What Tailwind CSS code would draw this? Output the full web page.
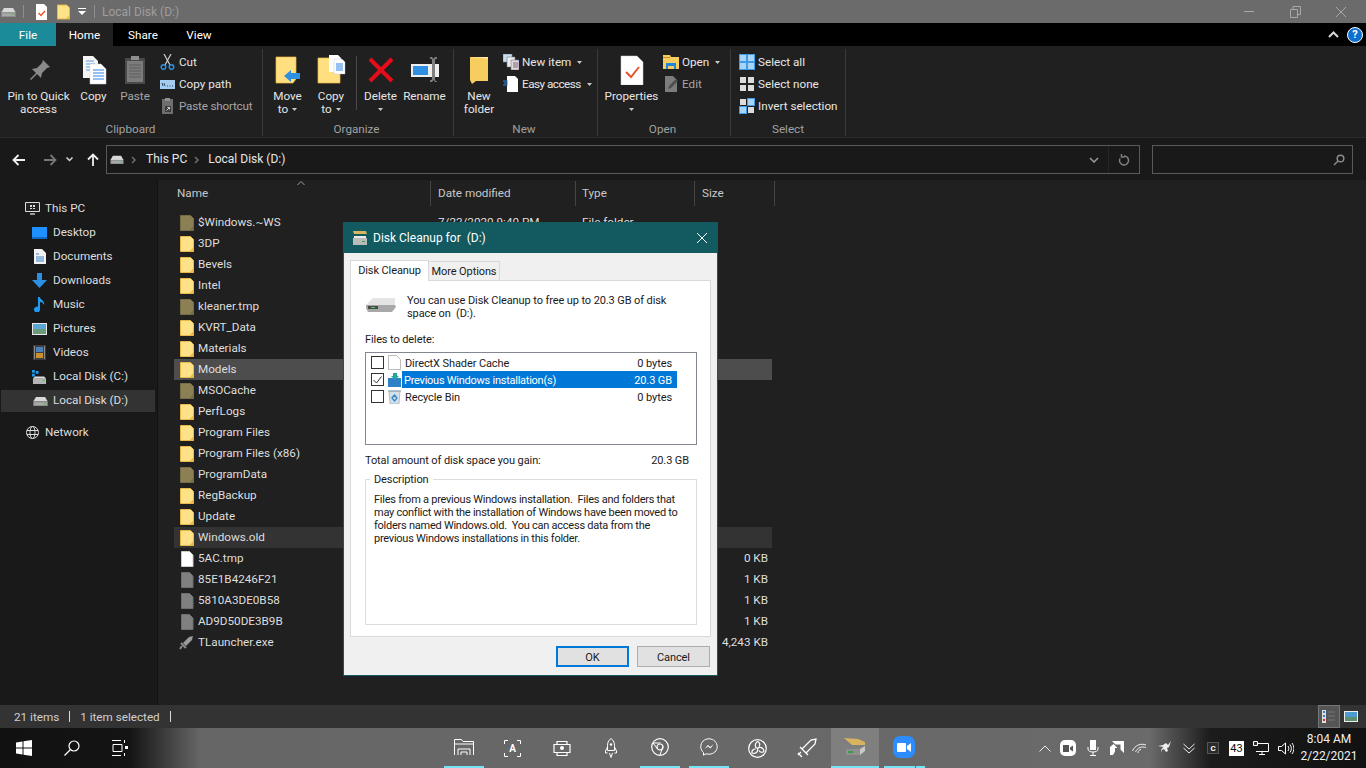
<!DOCTYPE html>
<html lang="en">
<head>
  <meta charset="UTF-8">
  <title>Local Disk (D:)</title>
  <script src="https://cdn.jsdelivr.net/npm/@tailwindcss/browser@4"></script>
</head>
<body class="font-['Roboto',sans-serif] text-[11.7px] leading-[13px] bg-[#202020] overflow-hidden whitespace-nowrap">
<svg class="hidden" xmlns="http://www.w3.org/2000/svg">
  <symbol id="folder" viewBox="0 0 14 16"><path d="M.5.5h10l3 3v12H.5z" fill="#ffe187" stroke="#e9b949"/><path d="M13.5 11v4.500h-4z" fill="#e9b949"/></symbol>
  <symbol id="folderdim" viewBox="0 0 14 16"><path d="M.5.5h10l3 3v12H.5z" fill="#8b7f54" stroke="#776c46"/><path d="M13.5 11v4.500h-4z" fill="#776c46"/></symbol>
  <symbol id="filegray" viewBox="0 0 14 16"><path d="M1.500.5h8l3.500 3.500v11.500H1.500z" fill="#808080" stroke="#6e6e6e"/></symbol>
  <symbol id="drive" viewBox="0 0 16 11"><path d="M3 1h10l3 5H0z" fill="#d8d8d8"/><path d="M0 6h16v5H0z" fill="#8d8d8d"/><path d="M1 7h14v3H1z" fill="#a9a9a9"/><path d="M11 8h3v1h-3z" fill="#43d04b"/></symbol>
  <symbol id="caret" viewBox="0 0 7 4"><path d="M0 0h7L3.500 4z" fill="#c8c8c8"/></symbol>
  <symbol id="chev" viewBox="0 0 6 8"><path d="M1 1l3 3-3 3" fill="none" stroke="#6e6e6e" stroke-width="1.500"/></symbol>
</svg>

<div class="w-[1366px] h-[768px] flex flex-col relative">
  <!-- title bar -->
  <div class="h-[23px] bg-[#6b6b6b] flex items-center shrink-0 relative">
    <svg class="w-[15px] h-[10px] ml-[1px]"><use href="#drive"/></svg>
    <div class="w-px h-[13px] bg-[#8f8f8f] ml-[7px]"></div>
    <svg class="w-[13px] h-[16px] ml-[11px]" viewBox="0 0 13 16"><path d="M1 0h8l3 3v13H1z" fill="#fff"/><path d="M3.500 9l2.500 2.500L10 7" fill="none" stroke="#e8542a" stroke-width="1.500"/></svg>
    <svg class="w-[13px] h-[16px] ml-[9px]"><use href="#folder"/></svg>
    <svg class="w-[8px] h-[7px] ml-[8px]" viewBox="0 0 8 7"><path d="M0 0h8v1H0z" fill="#fff"/><path d="M0 3h8L4 7z" fill="#fff"/></svg>
    <div class="w-px h-[13px] bg-[#8f8f8f] ml-[8px]"></div>
    <span class="ml-[7px] pt-[1px] text-[#9e9e9e] text-[12px]">Local Disk (D:)</span>
    <div class="ml-auto flex items-center mr-[2px]">
      <svg class="w-[46px] h-[12px]" viewBox="0 0 46 12"><path d="M18 5.500h10" stroke="#a8a8a8"/></svg>
      <svg class="w-[46px] h-[12px]" viewBox="0 0 46 12"><path d="M18.500 3.500h7v8h-7zM21 3.500V.5h7.500v8h-3" fill="none" stroke="#a8a8a8"/></svg>
      <svg class="w-[46px] h-[12px]" viewBox="0 0 46 12"><path d="M18 1l10 10M28 1L18 11" stroke="#a8a8a8"/></svg>
    </div>
  </div>

  <!-- ribbon tabs -->
  <div class="h-[23px] bg-black flex text-white shrink-0 items-stretch">
    <div class="w-[56px] bg-[#1b8a99] flex items-center justify-center pt-[1px]">File</div>
    <div class="w-[57px] bg-[#202020] flex items-center justify-center pt-[1px]">Home</div>
    <div class="w-[60px] flex items-center justify-center pt-[1px]">Share</div>
    <div class="w-[52px] flex items-center justify-center pt-[1px]">View</div>
    <div class="ml-auto flex items-center mr-[3px]">
      <svg class="w-[11px] h-[7px] mr-[8px]" viewBox="0 0 11 7"><path d="M1 6l4.500-4.500L10 6" fill="none" stroke="#d8d8d8" stroke-width="2"/></svg>
      <div class="w-[16px] h-[16px] rounded-full bg-[#0f6fd0] border border-white text-white text-[11px] font-bold flex items-center justify-center">?</div>
    </div>
  </div>

  <!-- ribbon -->
  <div class="h-[92px] bg-[#202020] border-b border-[#2c2c2c] flex pt-[3px] pb-[1px] text-[#e6e6e6] shrink-0">
    <!-- Clipboard -->
    <div class="w-[263px] border-r border-[#3a3a3a] flex flex-col">
      <div class="h-[73px] flex">
        <div class="w-[73px] ml-[2px] pt-[6px] flex flex-col items-center text-center">
          <svg class="w-[30px] h-[30px]" viewBox="0 0 30 30"><path d="M19 5l7 7-3 1-5 5-1 5-4-4-6 6-1-1 6-6-4-4 5-1 5-5z" fill="#8a8a8a"/></svg>
          <div class="mt-[5px]">Pin to Quick<br>access</div>
        </div>
        <div class="w-[37px] pt-[6px] flex flex-col items-center">
          <svg class="w-[30px] h-[30px]" viewBox="0 0 30 30"><path d="M4 1h10l5 5v17H4z" fill="#f4f4f4"/><path d="M7 6h8M7 9h9M7 12h9M7 15h9" stroke="#5a9be6"/><path d="M11 9h11l5 5v15H11z" fill="#fff" stroke="#d0d0d0" stroke-width=".5"/><path d="M14 15h11M14 18h11M14 21h11M14 24h11" stroke="#2f81e6"/></svg>
          <div class="mt-[5px]">Copy</div>
        </div>
        <div class="w-[46px] pt-[6px] flex flex-col items-center text-[#a6a6a6]">
          <svg class="w-[30px] h-[30px]" viewBox="0 0 30 30"><path d="M6 3h18a1 1 0 011 1v25H5V4a1 1 0 011-1z" fill="#4a4a4a"/><path d="M7 6h16v21H7z" fill="#7c7c7c"/><path d="M11 1h8v4h-8z" fill="#8f8f8f"/><path d="M9 10h12M9 13h12M9 16h12M9 19h12M9 22h12" stroke="#5c5c5c"/></svg>
          <div class="mt-[5px]">Paste</div>
        </div>
        <div class="pt-[2px] ml-[2px]">
          <div class="h-[22px] flex items-center gap-[4px]">
            <svg class="w-[15px] h-[16px]" viewBox="0 0 15 16"><path d="M4 0l6 11M11 0L5 11" stroke="#cfcfcf" stroke-width="1.200"/><circle cx="3.500" cy="13" r="2.300" fill="none" stroke="#2f8fe0" stroke-width="1.500"/><circle cx="11.500" cy="13" r="2.300" fill="none" stroke="#2f8fe0" stroke-width="1.500"/></svg>
            <span>Cut</span>
          </div>
          <div class="h-[22px] flex items-center gap-[4px]">
            <svg class="w-[15px] h-[9px]" viewBox="0 0 15 9"><path d="M0 0h15v9H0z" fill="#a5cdf2"/><path d="M2 3l1 3M4 3l1 3M7 6h1M9.500 6h1M12 6h1" stroke="#33475c"/></svg>
            <span>Copy path</span>
          </div>
          <div class="h-[22px] flex items-center gap-[4px] text-[#a6a6a6]">
            <svg class="w-[15px] h-[16px]" viewBox="0 0 15 16"><path d="M2 1h11v15H2z" fill="#6e6e6e"/><path d="M5 0h5v3H5z" fill="#8f8f8f"/><path d="M5 8h6v6H5z" fill="#3c3c3c"/><path d="M6.500 12.500L9.500 9.500M7.500 9.500h2v2" stroke="#cfcfcf" fill="none"/></svg>
            <span class="tracking-[-0.2px]">Paste shortcut</span>
          </div>
        </div>
      </div>
      <div class="mt-auto text-center text-[#a0a0a0] pr-[1px]">Clipboard</div>
    </div>
    <!-- Organize -->
    <div class="w-[191px] border-r border-[#3a3a3a] flex flex-col">
      <div class="h-[73px] flex">
        <div class="w-[45px] ml-[2px] pt-[6px] flex flex-col items-center text-center">
          <svg class="w-[30px] h-[30px]" viewBox="0 0 30 30"><path d="M3 2h20v22l-3 4H3z" fill="#ffdf7f" stroke="#e9b949" stroke-width=".7"/><path d="M11 21l7-6v3h9v6h-9v3z" fill="#2f8fe0"/></svg>
          <div class="mt-[5px]">Move<br>to <svg class="inline w-[5px] h-[3px] ml-[1px] align-middle"><use href="#caret"/></svg></div>
        </div>
        <div class="w-[42px] pt-[6px] flex flex-col items-center text-center">
          <svg class="w-[30px] h-[30px]" viewBox="0 0 30 30"><path d="M2 3h22v25H2z" fill="#ffdf7f" stroke="#e9b949" stroke-width=".7"/><path d="M13 0h9l3 3v14H13z" fill="#fff"/><path d="M18 4h8l3 3v12H18z" fill="#fff" stroke="#bbb" stroke-width=".4"/><path d="M20 9h7M20 11h7M20 13h7M20 15h7" stroke="#2f81e6"/></svg>
          <div class="mt-[5px]">Copy<br>to <svg class="inline w-[5px] h-[3px] ml-[1px] align-middle"><use href="#caret"/></svg></div>
        </div>
        <div class="w-px h-[54px] bg-[#4a4a4a] mt-[7px] ml-[4px]"></div>
        <div class="w-[43px] ml-[2px] pt-[6px] flex flex-col items-center text-center">
          <svg class="w-[30px] h-[30px]" viewBox="0 0 30 30"><path d="M4 4l22 22M26 4L4 26" stroke="#e50d1a" stroke-width="4"/></svg>
          <div class="mt-[5px]">Delete<br><svg class="inline w-[5px] h-[3px] align-middle"><use href="#caret"/></svg></div>
        </div>
        <div class="w-[45px] pt-[6px] flex flex-col items-center text-center">
          <svg class="w-[30px] h-[30px]" viewBox="0 0 30 30"><path d="M1 9h28v13H1z" fill="#eee"/><path d="M3 11h15v9H3z" fill="#2f8fe0"/><path d="M20 2h2l1.500 2L25 2h2v1.500l-2 1v21l2 1V27h-2l-1.500-2L22 27h-2v-1.500l2-1v-20l-2-1z" fill="#808080"/></svg>
          <div class="mt-[5px]">Rename</div>
        </div>
      </div>
      <div class="mt-auto text-center text-[#a0a0a0] pr-[3px]">Organize</div>
    </div>
    <!-- New -->
    <div class="w-[144px] border-r border-[#3a3a3a] flex flex-col">
      <div class="h-[73px] flex">
        <div class="w-[46px] ml-[2px] pt-[6px] flex flex-col items-center text-center">
          <svg class="w-[30px] h-[30px]" viewBox="0 0 30 30"><path d="M6 2h18v24H8z" fill="#ffe9a3"/><path d="M6 2l12 1 6 1v22H12l-4 3-2-4z" fill="#f6cd5e"/></svg>
          <div class="mt-[5px]">New<br>folder</div>
        </div>
        <div class="pt-[2px] ml-[1px]">
          <div class="h-[22px] flex items-center gap-[3px]">
            <svg class="w-[16px] h-[16px]" viewBox="0 0 16 16"><path d="M0 0h9v8H0z" fill="#c9dcef" stroke="#6f8aa5" stroke-width=".6"/><path d="M4 3h8v10H4z" fill="#eee" stroke="#777" stroke-width=".6"/><path d="M8 6h8v10H8z" fill="#ddd" stroke="#8a6f8a" stroke-width=".6"/><path d="M10 9h5M10 11h5M10 13h5" stroke="#8a5f7a"/></svg>
            <span>New item</span>
            <svg class="w-[5px] h-[3px] ml-[3px]"><use href="#caret"/></svg>
          </div>
          <div class="h-[22px] flex items-center gap-[3px]">
            <svg class="w-[16px] h-[16px]" viewBox="0 0 16 16"><path d="M4 0h8l3 3v13H4z" fill="#fff"/><path d="M0 5h5M1 7h4M0 9h5" stroke="#2f81e6"/></svg>
            <span class="tracking-[-0.5px]">Easy access</span>
            <svg class="w-[5px] h-[3px] ml-[3px]"><use href="#caret"/></svg>
          </div>
        </div>
      </div>
      <div class="mt-auto text-center text-[#a0a0a0] pr-[3px]">New</div>
    </div>
    <!-- Open -->
    <div class="w-[133px] border-r border-[#3a3a3a] flex flex-col">
      <div class="h-[73px] flex">
        <div class="w-[57px] ml-[5px] pt-[6px] flex flex-col items-center text-center">
          <svg class="w-[30px] h-[30px]" viewBox="0 0 30 30"><path d="M4 1h16l6 6v23H4z" fill="#fff" stroke="#ccc" stroke-width=".5"/><path d="M9 17l5 5 8-10" fill="none" stroke="#e8542a" stroke-width="2"/></svg>
          <div class="mt-[5px]">Properties<br><svg class="inline w-[5px] h-[3px] align-middle"><use href="#caret"/></svg></div>
        </div>
        <div class="pt-[2px] ml-[3px]">
          <div class="h-[22px] flex items-center gap-[3px]">
            <svg class="w-[16px] h-[14px]" viewBox="0 0 16 14"><path d="M0 0h7l1 2h8v12H0z" fill="#f6cd5e"/><path d="M0 2h7v1H0z" fill="#c98f1e"/><path d="M3 8h10v6h-2v-3H5v3H3z" fill="#1f86dc"/></svg>
            <span>Open</span>
            <svg class="w-[5px] h-[3px] ml-[3px]"><use href="#caret"/></svg>
          </div>
          <div class="h-[22px] flex items-center gap-[3px] text-[#a6a6a6]">
            <svg class="w-[16px] h-[16px]" viewBox="0 0 16 16"><path d="M2 0h8l4 4v12H2z" fill="#7c7c7c"/><path d="M5 13l1-3 7-7 2 2-7 7z" fill="#4d4d4d"/></svg>
            <span>Edit</span>
          </div>
        </div>
      </div>
      <div class="mt-auto text-center text-[#a0a0a0] pr-[3px]">Open</div>
    </div>
    <!-- Select -->
    <div class="w-[115px] border-r border-[#3a3a3a] flex flex-col">
      <div class="h-[73px] pl-[8px] pt-[2px]">
        <div class="h-[22px] flex items-center gap-[3px]">
          <svg class="w-[16px] h-[16px]" viewBox="0 0 16 16"><path d="M0 0h16v16H0z" fill="#3f9be8"/><path d="M1 1h6v6H1zM9 1h6v6H9zM1 9h6v6H1zM9 9h6v6H9z" fill="#a8d4f7"/></svg>
          <span>Select all</span>
        </div>
        <div class="h-[22px] flex items-center gap-[3px]">
          <svg class="w-[16px] h-[16px]" viewBox="0 0 16 16"><path d="M1 1h6v6H1zM9 1h6v6H9zM1 9h6v6H1zM9 9h6v6H9z" fill="#dcdcdc"/></svg>
          <span>Select none</span>
        </div>
        <div class="h-[22px] flex items-center gap-[3px]">
          <svg class="w-[16px] h-[16px]" viewBox="0 0 16 16"><path d="M8 0h8v8H8zM0 8h8v8H0z" fill="#3f9be8"/><path d="M9 1h6v6H9zM1 9h6v6H1z" fill="#a8d4f7"/><path d="M1 1h6v6H1zM9 9h6v6H9z" fill="#dcdcdc"/></svg>
          <span>Invert selection</span>
        </div>
      </div>
      <div class="mt-auto text-center text-[#a0a0a0]">Select</div>
    </div>
  </div>

  <!-- address row -->
  <div class="h-[42px] bg-[#191919] flex items-center shrink-0 pt-[1px]">
    <svg class="w-[14px] h-[12px] ml-[12px]" viewBox="0 0 14 12"><path d="M13 6H2M6.500 1L1.500 6l5 5" fill="none" stroke="#f0f0f0" stroke-width="1.800"/></svg>
    <svg class="w-[14px] h-[12px] ml-[17px]" viewBox="0 0 14 12"><path d="M1 6h11M7.500 1l5 5-5 5" fill="none" stroke="#777" stroke-width="1.800"/></svg>
    <svg class="w-[7px] h-[5px] ml-[9px]" viewBox="0 0 7 5"><path d="M.5.5l3 3 3-3" fill="none" stroke="#d8d8d8" stroke-width="1.500"/></svg>
    <svg class="w-[12px] h-[13px] ml-[14px]" viewBox="0 0 12 13"><path d="M6 13V2M1 6.500l5-5 5 5" fill="none" stroke="#f0f0f0" stroke-width="1.800"/></svg>
    <div class="w-[1034px] h-[29px] ml-[7px] border border-[#5a5a5a] flex items-center text-[#e6e6e6] text-[12px]">
      <svg class="w-[14px] h-[9px] ml-[3px]"><use href="#drive"/></svg>
      <svg class="w-[6px] h-[8px] ml-[7px]"><use href="#chev"/></svg>
      <span class="ml-[9px]">This PC</span>
      <svg class="w-[6px] h-[8px] ml-[7px]"><use href="#chev"/></svg>
      <span class="ml-[8px]">Local Disk (D:)</span>
      <svg class="w-[10px] h-[6px] ml-auto mr-[9px]" viewBox="0 0 10 6"><path d="M1 1l4 4 4-4" fill="none" stroke="#9a9a9a" stroke-width="1.500"/></svg>
      <div class="w-[31px] h-full border-l border-[#262626] flex items-center justify-center">
        <svg class="w-[12px] h-[12px]" viewBox="0 0 12 12"><path d="M6 2a4.500 4.500 0 11-4 2.500M3.500 0v3h3" fill="none" stroke="#7f7f7f" stroke-width="1.500"/></svg>
      </div>
    </div>
    <div class="w-[201px] h-[29px] ml-[12px] border border-[#5a5a5a] flex items-center justify-end pr-[7px]">
      <svg class="w-[12px] h-[12px]" viewBox="0 0 12 12"><circle cx="7.500" cy="4.500" r="3.300" fill="none" stroke="#8a8a8a" stroke-width="1.500"/><path d="M5 7l-4 4" stroke="#8a8a8a" stroke-width="1.500"/></svg>
    </div>
  </div>

  <!-- content -->
  <div class="flex flex-1 min-h-0">
    <!-- navigation pane -->
    <div class="w-[158px] bg-[#191919] border-r border-[#111] shrink-0 pt-[17px] text-[#dedede] [&>div]:pb-[0.5px]">
      <div class="h-[24px] flex items-center pl-[25px]">
        <svg class="w-[15px] h-[13px] mr-[5px]" viewBox="0 0 15 13"><path d="M.5.5h14v9H.5z" fill="#222" stroke="#ddd"/><path d="M5 3h2v2H5zM8 3h2v2H8zM5 6h2v1H5zM8 6h2v1H8z" fill="#ddd"/><path d="M5 11h5v2H5z" fill="#999"/></svg>This PC</div>
      <div class="h-[24px] flex items-center pl-[32px]">
        <svg class="w-[15px] h-[12px] mr-[6px]" viewBox="0 0 15 12"><path d="M0 0h15v10H0z" fill="#1e90ff"/><path d="M0 10h15v2H0z" fill="#0f6bc4"/></svg>Desktop</div>
      <div class="h-[24px] flex items-center pl-[34px]">
        <svg class="w-[12px] h-[15px] mr-[7px]" viewBox="0 0 12 15"><path d="M0 0h8l4 4v11H0z" fill="#f2f2f2"/><path d="M2 5h3M2 8h8M2 10h8M2 12h8" stroke="#3b82c4"/></svg>Documents</div>
      <div class="h-[24px] flex items-center pl-[32px]">
        <svg class="w-[15px] h-[15px] mr-[6px]" viewBox="0 0 15 15"><path d="M5 0h5v7h5l-7.500 8L0 7h5z" fill="#2b8fe6"/></svg>Downloads</div>
      <div class="h-[24px] flex items-center pl-[34px]">
        <svg class="w-[11px] h-[15px] mr-[8px]" viewBox="0 0 11 15"><path d="M4 0h2c0 3 5 3 4 8-1-2-2-3-4-3v7.500a3 3 0 11-2-2.800z" fill="#1e9bf0"/></svg>Music</div>
      <div class="h-[24px] flex items-center pl-[32px]">
        <svg class="w-[15px] h-[12px] mr-[6px]" viewBox="0 0 15 12"><path d="M0 0h15v12H0z" fill="#e8e8e8"/><path d="M1 1h13v5H1z" fill="#5aa7d6"/><path d="M1 6h13v5H1z" fill="#6b9a7a"/></svg>Pictures</div>
      <div class="h-[24px] flex items-center pl-[33px]">
        <svg class="w-[13px] h-[15px] mr-[7px]" viewBox="0 0 13 15"><path d="M0 0h13v15H0z" fill="#3d3d3d"/><path d="M3 2h7v5H3z" fill="#4d7fb8"/><path d="M3 8h7v5H3z" fill="#c9902f"/><path d="M1 1h1v13H1zM11 1h1v13h-1z" fill="#8a8a8a"/></svg>Videos</div>
      <div class="h-[24px] flex items-center pl-[32px]">
        <svg class="w-[15px] h-[14px] mr-[6px]" viewBox="0 0 16 15"><path d="M0 0h3v3H0zM4 1h3v3H4zM0 4h3v3H0z" fill="#1e9bf0"/><path d="M1 9h14v6H1z" fill="#b5b5b5"/><path d="M3 7h10l2 2H1z" fill="#e0e0e0"/><path d="M11 11h3v1h-3z" fill="#43d04b"/></svg>Local Disk (C:)</div>
      <div class="h-[22px] my-[1px] w-[154px] ml-[1px] bg-[#333] flex items-center pl-[32px]">
        <svg class="w-[15px] h-[10px] mr-[5px]"><use href="#drive"/></svg>Local Disk (D:)</div>
      <div class="h-[24px] mt-[9px] flex items-center pl-[26px]">
        <svg class="w-[13px] h-[13px] mr-[6px]" viewBox="0 0 13 13"><circle cx="6.500" cy="6.500" r="6" fill="none" stroke="#ddd"/><ellipse cx="6.500" cy="6.500" rx="2.500" ry="6" fill="none" stroke="#ddd"/><path d="M1 4.500h11M1 8.500h11" stroke="#ddd"/></svg>Network</div>
    </div>

    <!-- file list -->
    <div class="flex-1 pl-[16px] text-[#dedede]">
      <div class="h-[26px] flex items-center text-[#c8c8c8] relative pt-[1px]">
        <div class="w-[257px] h-full border-r border-[#454545] flex items-center pl-[3px]">Name</div>
        <svg class="absolute left-[123px] top-[1px] w-[8px] h-[4px]" viewBox="0 0 8 4"><path d="M.5 4L4 .5 7.500 4" fill="none" stroke="#9a9a9a"/></svg>
        <div class="w-[145px] h-full border-r border-[#454545] flex items-center pl-[7px]">Date modified</div>
        <div class="w-[119px] h-full border-r border-[#454545] flex items-center pl-[6px]">Type</div>
        <div class="w-[80px] h-full border-r border-[#454545] flex items-center pl-[7px]">Size</div>
      </div>
      <div class="w-[598px] mt-[6px]">
        <div class="h-[21px] flex items-center pl-[6px]"><svg class="w-[14px] h-[16px] mr-[4px]"><use href="#folderdim"/></svg><span class="w-[240px]">$Windows.~WS</span><span class="w-[144px]">7/22/2020 9:40 PM</span><span>File folder</span></div>
        <div class="h-[21px] flex items-center pl-[6px]"><svg class="w-[14px] h-[16px] mr-[4px]"><use href="#folder"/></svg>3DP</div>
        <div class="h-[21px] flex items-center pl-[6px]"><svg class="w-[14px] h-[16px] mr-[4px]"><use href="#folder"/></svg>Bevels</div>
        <div class="h-[21px] flex items-center pl-[6px]"><svg class="w-[14px] h-[16px] mr-[4px]"><use href="#folder"/></svg>Intel</div>
        <div class="h-[21px] flex items-center pl-[6px]"><svg class="w-[14px] h-[16px] mr-[4px]"><use href="#folderdim"/></svg>kleaner.tmp</div>
        <div class="h-[21px] flex items-center pl-[6px]"><svg class="w-[14px] h-[16px] mr-[4px]"><use href="#folder"/></svg>KVRT_Data</div>
        <div class="h-[21px] flex items-center pl-[6px]"><svg class="w-[14px] h-[16px] mr-[4px]"><use href="#folder"/></svg>Materials</div>
        <div class="h-[21px] flex items-center pl-[6px] bg-[#4d4d4d]"><svg class="w-[14px] h-[16px] mr-[4px]"><use href="#folder"/></svg>Models</div>
        <div class="h-[21px] flex items-center pl-[6px]"><svg class="w-[14px] h-[16px] mr-[4px]"><use href="#folderdim"/></svg>MSOCache</div>
        <div class="h-[21px] flex items-center pl-[6px]"><svg class="w-[14px] h-[16px] mr-[4px]"><use href="#folder"/></svg>PerfLogs</div>
        <div class="h-[21px] flex items-center pl-[6px]"><svg class="w-[14px] h-[16px] mr-[4px]"><use href="#folder"/></svg>Program Files</div>
        <div class="h-[21px] flex items-center pl-[6px]"><svg class="w-[14px] h-[16px] mr-[4px]"><use href="#folder"/></svg>Program Files (x86)</div>
        <div class="h-[21px] flex items-center pl-[6px]"><svg class="w-[14px] h-[16px] mr-[4px]"><use href="#folderdim"/></svg>ProgramData</div>
        <div class="h-[21px] flex items-center pl-[6px]"><svg class="w-[14px] h-[16px] mr-[4px]"><use href="#folder"/></svg>RegBackup</div>
        <div class="h-[21px] flex items-center pl-[6px]"><svg class="w-[14px] h-[16px] mr-[4px]"><use href="#folder"/></svg>Update</div>
        <div class="h-[21px] flex items-center pl-[6px] bg-[#333]"><svg class="w-[14px] h-[16px] mr-[4px]"><use href="#folder"/></svg>Windows.old</div>
        <div class="h-[21px] flex items-center pl-[6px] pr-[4px]"><svg class="w-[14px] h-[16px] mr-[4px]" viewBox="0 0 14 16"><path d="M1.500.5h8l3.500 3.500v11.500H1.500z" fill="#fff" stroke="#ccc"/></svg>5AC.tmp<span class="ml-auto">0 KB</span></div>
        <div class="h-[21px] flex items-center pl-[6px] pr-[4px]"><svg class="w-[14px] h-[16px] mr-[4px]"><use href="#filegray"/></svg>85E1B4246F21<span class="ml-auto">1 KB</span></div>
        <div class="h-[21px] flex items-center pl-[6px] pr-[4px]"><svg class="w-[14px] h-[16px] mr-[4px]"><use href="#filegray"/></svg>5810A3DE0B58<span class="ml-auto">1 KB</span></div>
        <div class="h-[21px] flex items-center pl-[6px] pr-[4px]"><svg class="w-[14px] h-[16px] mr-[4px]"><use href="#filegray"/></svg>AD9D50DE3B9B<span class="ml-auto">1 KB</span></div>
        <div class="h-[21px] flex items-center pl-[5px] pr-[4px]"><svg class="w-[15px] h-[15px] mr-[4px]" viewBox="0 0 15 15"><path d="M14 1l-1 4-6 6-3-3 6-6z" fill="#9a9a9a"/><path d="M2 8l5 5M3 11l-2 3" stroke="#8a8a8a" stroke-width="2"/></svg>TLauncher.exe<span class="ml-auto">4,243 KB</span></div>
      </div>
    </div>
  </div>

  <!-- status bar -->
  <div class="h-[23px] bg-[#333] flex items-center shrink-0 text-[#d0d0d0]">
    <span class="ml-[14px] pt-[1px]">21 items</span>
    <div class="w-px h-[11px] bg-[#d8d8d8] ml-[10px]"></div>
    <span class="ml-[10px] pt-[1px]">1 item selected</span>
    <div class="w-px h-[11px] bg-[#d8d8d8] ml-[10px]"></div>
    <div class="ml-auto w-[22px] h-[23px] bg-[#555] border border-[#777] flex items-center justify-center">
      <svg class="w-[14px] h-[13px]" viewBox="0 0 14 13"><path d="M0 0h4v13H0z" fill="#ddd"/><path d="M1 1h2v2H1z" fill="#2f81e6"/><path d="M1 5h2v2H1z" fill="#2f81e6"/><path d="M1 9h2v2H1z" fill="#d22"/><path d="M6 2h7M6 6h7M6 10h7" stroke="#777"/></svg>
    </div>
    <svg class="w-[14px] h-[11px] ml-[4px] mr-[8px]" viewBox="0 0 14 11"><path d="M0 0h14v11H0z" fill="#eee"/><path d="M1 1h12v5H1z" fill="#4d9bd0"/><path d="M1 6h12v4H1z" fill="#5c8f70"/></svg>
  </div>

  <!-- taskbar -->
  <div class="h-[40px] shrink-0 bg-[linear-gradient(90deg,#111_0,#141414_130px,#666_200px,#6a6a6a_1150px,#1c1c1c_1210px,#111_1366px)] flex items-center text-white">
    <svg class="w-[16px] h-[16px] ml-[16px]" viewBox="0 0 16 16"><path d="M0 2.500l6.500-1v6H0zM7.500 1.300L16 0v7.500H7.500zM0 8.500h6.500v6l-6.500-1zM7.500 8.500H16V16l-8.500-1.300z" fill="#fff"/></svg>
    <svg class="w-[16px] h-[16px] ml-[32px]" viewBox="0 0 16 16"><circle cx="10" cy="6" r="5" fill="none" stroke="#fff" stroke-width="1.200"/><path d="M6.500 9.500L.5 15.500" stroke="#fff" stroke-width="1.200"/></svg>
    <svg class="w-[16px] h-[16px] ml-[32px]" viewBox="0 0 16 16"><path d="M0 .5h9M0 15.500h9M1 4.500h9v7H1zM12.500 0v3M12.500 13v3" fill="none" stroke="#fff"/><path d="M13 6h3v3h-3z" fill="#fff"/></svg>

    <div class="ml-[311px] flex h-full items-stretch">
      <div class="w-[49px] flex items-center justify-center"><div class="w-[40px] h-full flex items-center justify-center border-b-2 border-[#76e4f4]">
        <svg class="w-[20px] h-[18px]" viewBox="0 0 20 18"><path d="M.5 17V1.500h7l1.500 2h10.500V17M.5 6h19M4 17v-6h12v6M7 17v-3h6v3" fill="none" stroke="#fff"/></svg></div></div>
      <div class="w-[49px] flex items-center justify-center">
        <div class="relative w-[17px] h-[17px] flex items-center justify-center text-[10px] font-bold border-[#fff]">
          <svg class="absolute inset-0" viewBox="0 0 17 17"><path d="M.5 4V.5H4M13 .5h3.500V4M16.500 13v3.500H13M4 16.500H.5V13" fill="none" stroke="#fff"/></svg>A</div></div>
      <div class="w-[49px] flex items-center justify-center">
        <svg class="w-[18px] h-[16px]" viewBox="0 0 18 16"><path d="M1 4.500h16v8H1zM4 4.500v-3h10v3M4 12.500v3h10v-3" fill="none" stroke="#fff" stroke-width="1.200"/><circle cx="9" cy="8" r="2" fill="#fff"/></svg></div>
      <div class="w-[49px] flex items-center justify-center">
        <svg class="w-[12px] h-[20px]" viewBox="0 0 12 20"><path d="M6 .5c3 2 3.500 5 3.500 7v5h-7v-5c0-2 .5-5 3.500-7zM2.500 9L.5 13v2h2M9.500 9l2 4v2h-2M4.500 15L6 19.500 7.500 15" fill="none" stroke="#fff"/><circle cx="6" cy="6.500" r="1.200" fill="#fff"/></svg></div>
      <div class="w-[49px] flex items-center justify-center"><div class="w-[40px] h-full flex items-center justify-center border-b-2 border-[#76e4f4]">
        <svg class="w-[18px] h-[18px]" viewBox="0 0 18 18"><circle cx="9" cy="9" r="8.300" fill="none" stroke="#fff" stroke-width="1.200"/><circle cx="9" cy="9" r="3" fill="none" stroke="#fff" stroke-width="1.200"/><path d="M2 5h7.500M12 8l-3 9M6.500 11L2 5" stroke="#fff"/></svg></div></div>
      <div class="w-[49px] flex items-center justify-center"><div class="w-[40px] h-full flex items-center justify-center border-b-2 border-[#76e4f4]">
        <svg class="w-[18px] h-[18px]" viewBox="0 0 18 18"><path d="M9 .8C4.300.8.800 4.200.800 8.700c0 2.400 1 4.400 2.700 5.800V17.200l2.500-1.400c1 .3 2 .4 3 .4 4.700 0 8.200-3.300 8.200-7.500S13.700.8 9 .8z" fill="none" stroke="#fff"/><path d="M4.500 11l3.300-4 2.500 2 3.300-3-3 4.500-2.700-2z" fill="#fff"/></svg></div></div>
      <div class="w-[49px] flex items-center justify-center">
        <svg class="w-[19px] h-[19px]" viewBox="0 0 19 19"><circle cx="9.500" cy="9.500" r="8.800" fill="none" stroke="#fff" stroke-width="1.200"/><path d="M9.500 9.500c-3-1-3-5 0-7 2 .5 3 3 1.500 5M9.500 9.500c2-2 6-1 6.500 2.500-1 2-4 1.500-5-.5M9.500 9.500c1 3-2 6-5.500 4.500-.5-2 1-4 3.500-4" fill="none" stroke="#fff" stroke-width="1.200"/></svg></div>
      <div class="w-[49px] flex items-center justify-center">
        <svg class="w-[20px] h-[20px]" viewBox="0 0 20 20"><path d="M19 1l-1 5-9 9-4-4 9-9zM3 9l8 8M4 14l-3 3M1 15l4 4" fill="none" stroke="#fff" stroke-width="1.300"/></svg></div>
      <div class="w-[48px] bg-[#7f7f7f] border-b-2 border-[#76e4f4] flex items-center justify-center">
        <svg class="w-[24px] h-[22px]" viewBox="0 0 24 22"><path d="M1 2l14 1 7 3v3H9z" fill="#d9b45f"/><path d="M3 13h14l5-3v5l-5 4H3z" fill="#c9c9c9"/><path d="M3 13h14v6H3z" fill="#8f8f8f"/><path d="M5 15h5v2H5z" fill="#3d9a47"/></svg></div>
      <div class="w-[49px] flex items-start justify-center relative pt-[8px]">
        <div class="w-[22px] h-[22px] rounded-[7px] bg-[#2d8cff] flex items-center justify-center">
          <svg class="w-[14px] h-[9px]" viewBox="0 0 14 9"><path d="M0 1a1 1 0 011-1h7a1 1 0 011 1v7a1 1 0 01-1 1H1a1 1 0 01-1-1z" fill="#fff"/><path d="M10 3l4-3v9l-4-3z" fill="#fff"/></svg>
        </div>
        <div class="absolute bottom-0 left-[5px] w-[31px] h-[2px] bg-[#76e4f4]"></div>
        <div class="absolute bottom-0 left-[37px] w-[9px] h-[2px] bg-[#76e4f4]"></div>
      </div>
    </div>

    <div class="ml-[111px] flex items-center">
      <svg class="w-[12px] h-[7px]" viewBox="0 0 12 7"><path d="M.5 6.500L6 1l5.500 5.500" fill="none" stroke="#eee"/></svg>
      <div class="w-[16px] h-[16px] ml-[9px] rounded-[5px] bg-white flex items-center justify-center"><svg class="w-[10px] h-[7px]" viewBox="0 0 10 7"><path d="M0 0h6v7H0zM7 2.500L10 .5v6L7 4.500z" fill="#555"/></svg></div>
      <svg class="w-[12px] h-[16px] ml-[11px]" viewBox="0 0 12 16"><path d="M3 0h6v10H3z" fill="#fff"/><path d="M1 7v2c0 2 2 3 5 3s5-1 5-3V7M6 12v4M3 15.500h6" fill="none" stroke="#fff"/></svg>
      <svg class="w-[14px] h-[14px] ml-[11px]" viewBox="0 0 14 14"><path d="M2 0h12v12l-3.500-3.500V3.500H5.500zM0 14V6l3.500-3 4 4H5v3.500L3 14z" fill="#fff"/></svg>
      <svg class="w-[14px] h-[11px] ml-[8px]" viewBox="0 0 14 11"><path d="M14 2C9 0 3 2 .5 8M14 4.500C10 3 5.500 4.500 3.500 9M9 6.500C7.500 6.500 6 8 6 10" fill="none" stroke="#eee"/></svg>
      <svg class="w-[14px] h-[14px] ml-[12px]" viewBox="0 0 14 14"><path d="M0 5l5-1 3-2 2 2 3-4-2 6-2 1 1 3-2 1-2-3-2 1-1 3 .5-4 2-2z" fill="#eee"/></svg>
      <svg class="w-[12px] h-[11px] ml-[11px]" viewBox="0 0 12 11"><path d="M.5 1L6 6l5.500-5M.5 5L6 10l5.500-5" fill="none" stroke="#eee"/></svg>
      <div class="w-[12px] h-[12px] ml-[12px] bg-[#2a2a2a] border border-[#555] flex items-center justify-center text-[8px] font-bold">C</div>
      <div class="w-[15px] h-[15px] ml-[10px] bg-white text-[#111] text-[11px] flex items-center justify-center">43</div>
      <svg class="w-[16px] h-[14px] ml-[9px]" viewBox="0 0 16 14"><path d="M3 2.500h12.500v8H3M9 10.500V13.500M6 13.500h6" fill="none" stroke="#fff"/><path d="M.5.5h4v4h-4z" fill="#333" stroke="#fff"/></svg>
      <svg class="w-[16px] h-[13px] ml-[9px]" viewBox="0 0 16 13"><path d="M.5 4.500h3l4-3.500v11l-4-3.500h-3zM10 4c1 1.500 1 3.500 0 5M12 2.500c1.800 2.500 1.800 5.500 0 8M14 1c2.500 3.500 2.500 7.500 0 11" fill="none" stroke="#fff"/></svg>
      <div class="w-[70px] text-center leading-[17px] text-[#f0f0f0] text-[12px]">8:04 AM<br>2/22/2021</div>
    </div>
  </div>

  <!-- Disk Cleanup dialog -->
  <div class="absolute left-[343px] top-[222px] w-[375px] h-[454px] bg-[#f0f0f0] border border-[#125a60] flex flex-col text-[#1a1a1a] text-[11px] tracking-[-0.1px]">
    <div class="h-[30px] bg-[#125a60] flex items-center text-white shrink-0 text-[12px] tracking-normal">
      <svg class="w-[16px] h-[14px] ml-[8px] mr-[5px]" viewBox="0 0 16 14"><path d="M1 0h13l1 3H2z" fill="#d9b45f"/><path d="M1 7h14v7H1z" fill="#bbb"/><path d="M2 5h12v2H2z" fill="#e8e8e8"/><path d="M10 10h3v1h-3z" fill="#3d9a47"/></svg>
      <span>Disk Cleanup for&nbsp; (D:)</span>
      <svg class="w-[10px] h-[10px] ml-auto mr-[10px]" viewBox="0 0 10 10"><path d="M0 0l10 10M10 0L0 10" stroke="#fff"/></svg>
    </div>
    <div class="flex-1 px-[6px] pt-[7px] relative">
      <div class="flex items-end h-[21px] relative z-10">
        <div class="w-[79px] h-[21px] bg-white border border-b-0 border-[#d9d9d9] flex items-center justify-center pb-[2px]">Disk Cleanup</div>
        <div class="w-[71px] h-[19px] bg-[#f0f0f0] border border-b-0 border-l-0 border-[#d9d9d9] flex items-center justify-center mb-px">More Options</div>
      </div>
      <div class="h-[357px] -mt-px bg-white border border-[#d9d9d9] px-[14px] pt-[13px] relative">
        <div class="flex">
          <svg class="w-[30px] h-[14px] ml-[1px] mt-[4px] shrink-0" viewBox="0 0 30 14"><path d="M7 0h22v7H0z" fill="#e4e4e4"/><path d="M0 7h29l1 2-4 5H2L0 10z" fill="#a8a8a8"/><path d="M2 8h10v3H2z" fill="#4a4a4a"/><path d="M5 9h4v1H5z" fill="#43d04b"/></svg>
          <p class="ml-[11px]">You can use Disk Cleanup to free up to 20.3 GB of disk<br>space on&nbsp; (D:).</p>
        </div>
        <div class="mt-[13px]">Files to delete:</div>
        <div class="mt-[6px] h-[93px] w-[332px] border border-[#828790] pt-[1px]">
          <div class="h-[17px] flex items-center pl-[5px]">
            <div class="w-[13px] h-[13px] border border-[#333] bg-white"></div>
            <svg class="w-[13px] h-[15px] ml-[4px]" viewBox="0 0 13 15"><path d="M.5.5h8l4 4v10H.5z" fill="#fff" stroke="#bbb"/></svg>
            <span class="ml-[4px] w-[199px] pt-[1px]">DirectX Shader Cache</span>
            <span class="w-[68px] text-right pt-[1px]">0 bytes</span>
          </div>
          <div class="h-[17px] flex items-center pl-[5px]">
            <div class="w-[13px] h-[13px] border border-[#333] bg-white flex items-center justify-center"><svg class="w-[9px] h-[8px]" viewBox="0 0 9 8"><path d="M.5 4l3 3L8.500.5" fill="none" stroke="#333"/></svg></div>
            <svg class="w-[13px] h-[14px] ml-[4px]" viewBox="0 0 13 14"><path d="M0 5h13v9H0z" fill="#2f81c6"/><path d="M5 0h4v3h2l-4 4-4-4h2z" fill="#22a7a0"/></svg>
            <div class="ml-[1px] w-[275px] h-[17px] bg-[#0078d7] text-white flex items-center pl-[2px] pr-[5px] pt-[1px] justify-between"><span class="tracking-[-0.25px]">Previous Windows installation(s)</span><span>20.3 GB</span></div>
          </div>
          <div class="h-[17px] flex items-center pl-[5px]">
            <div class="w-[13px] h-[13px] border border-[#333] bg-white"></div>
            <svg class="w-[13px] h-[15px] ml-[4px]" viewBox="0 0 13 15"><path d="M1 2h11l-1 13H2z" fill="#d5dfe6" stroke="#8fa0ac" stroke-width=".6"/><path d="M0 2h13" stroke="#8fa0ac"/><path d="M4 9l2.500-3L9 9l-2.500 3z" fill="none" stroke="#2f81c6" stroke-width="1.200"/></svg>
            <span class="ml-[4px] w-[199px] pt-[1px]">Recycle Bin</span>
            <span class="w-[68px] text-right pt-[1px]">0 bytes</span>
          </div>
        </div>
        <div class="mt-[9px] flex justify-between w-[324px]"><span>Total amount of disk space you gain:</span><span>20.3 GB</span></div>
        <div class="mt-[12px] h-[146px] w-[332px] border border-[#dcdcdc] px-[8px] pt-[13px] relative">
          <span class="absolute left-[4px] -top-[7px] bg-white px-[4px]">Description</span>
          <p class="tracking-[-0.25px]">Files from a previous Windows installation.&nbsp; Files and folders that<br>may conflict with the installation of Windows have been moved to<br>folders named Windows.old.&nbsp; You can access data from the<br>previous Windows installations in this folder.</p>
        </div>
      </div>
      <div class="flex justify-end gap-[8px] mt-[9px] mr-[1px]">
        <div class="w-[73px] h-[21px] bg-[#e1e1e1] border-2 border-[#0078d7] flex items-center justify-center pt-[1px]">OK</div>
        <div class="w-[73px] h-[21px] bg-[#e1e1e1] border border-[#adadad] flex items-center justify-center pt-[1px]">Cancel</div>
      </div>
    </div>
  </div>
</div>
</body>
</html>
